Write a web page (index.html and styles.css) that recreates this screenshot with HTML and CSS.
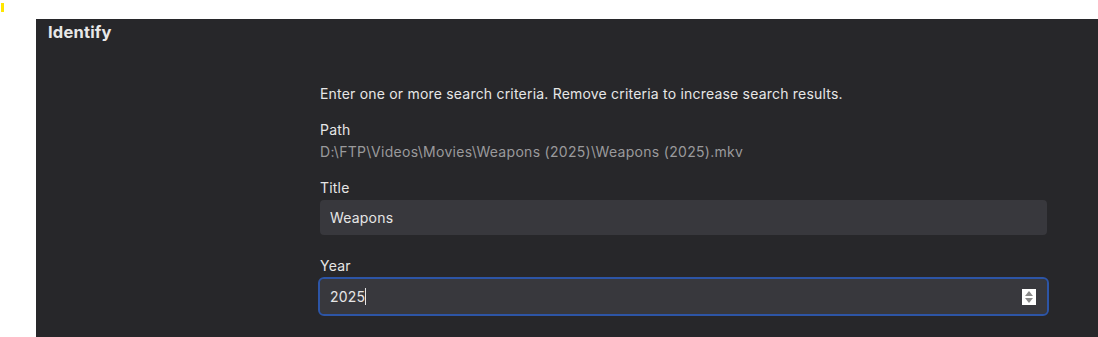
FILE: index.html
```html
<!DOCTYPE html>
<html lang="en">
<head>
    <meta charset="UTF-8">
    <title>Identify</title>
    <link rel="stylesheet" href="styles.css">
</head>
<body>
    <div class="page">
        <div class="marker"></div>
        <div class="dialog">
            <h2 class="dialog-title">Identify</h2>
            <div class="form">
                <p class="hint">Enter one or more search criteria. Remove criteria to increase search results.</p>
                <div class="field field-path">
                    <div class="label">Path</div>
                    <div class="path">D:\FTP\Videos\Movies\Weapons (2025)\Weapons (2025).mkv</div>
                </div>
                <div class="field">
                    <label class="label" for="title">Title</label>
                    <input id="title" class="input" type="text" value="Weapons">
                </div>
                <div class="field">
                    <label class="label label-year" for="year">Year</label>
                    <div class="input focused">
                        <span>2025<span class="caret"></span></span>
                        <span class="spinner">
                            <svg viewBox="0 0 14 16" width="14" height="16">
                                <rect width="14" height="16" fill="#fff"/>
                                <path d="M7 2 L11 7 H3 Z" fill="#8a8a8a"/>
                                <path d="M7 14 L11 9 H3 Z" fill="#8a8a8a"/>
                            </svg>
                        </span>
                    </div>
                </div>
            </div>
        </div>
    </div>
</body>
</html>
```

FILE: styles.css
```css
body {
    margin: 0;
    background-color: #fff;
    font-family: Inter, 'Noto Sans', sans-serif;
    color: #e6e6e6;
    letter-spacing: 0.2px;
}
.page {
    position: relative;
    padding: 19px 0 0 36px;
    height: 318px;
}
.marker {
    position: absolute;
    left: 1px;
    top: 3px;
    width: 3px;
    height: 9px;
    background-color: #ffe600;
}
.dialog {
    background-color: #27272a;
    height: 100%;
}
.dialog-title {
    margin: 0;
    padding: 2px 12px 0;
    font-size: 16.5px;
    font-weight: 700;
    line-height: 22px;
    color: #e8e8e8;
}
.form {
    width: 727px;
    margin-left: 284px;
    padding-top: 40px;
}
.hint {
    margin: 0 0 15px;
    font-size: 14px;
    line-height: 22px;
}
.field {
    margin-bottom: 21px;
}
.field-path {
    margin-bottom: 16px;
}
.label {
    display: block;
    font-size: 14px;
    line-height: 20px;
    margin-bottom: 2px;
}
.label-year {
    margin-bottom: 3px;
}
.path {
    margin-top: 2px;
    font-size: 14px;
    line-height: 20px;
    color: #9a9a9c;
    letter-spacing: 0.3px;
}
.input {
    box-sizing: border-box;
    display: flex;
    align-items: center;
    justify-content: space-between;
    width: 100%;
    height: 35px;
    padding: 0 10px;
    border: none;
    border-radius: 4px;
    background-color: #38383d;
    color: #e6e6e6;
    font-family: inherit;
    font-size: 14px;
    letter-spacing: 0.2px;
    outline: none;
}
.focused {
    outline: 2px solid #2d55a6;
    outline-offset: 0;
}
.caret {
    display: inline-block;
    width: 1px;
    height: 17px;
    background-color: #e6e6e6;
    vertical-align: -3px;
}
.spinner {
    display: flex;
    margin-right: 1px;
}
```
